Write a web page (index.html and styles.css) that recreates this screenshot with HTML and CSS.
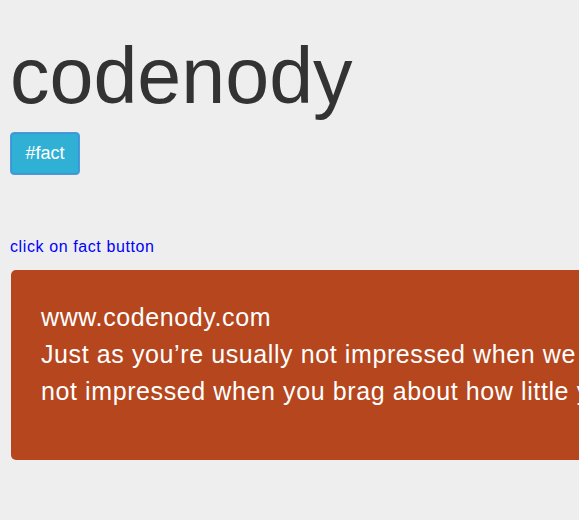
FILE: index.html
```html
<!DOCTYPE html>
<html lang="en">
<head>
<meta charset="utf-8">
<title>codenody</title>
<link rel="stylesheet" href="styles.css">
</head>
<body>
<div class="page">
  <h1 class="title">codenody</h1>
  <div class="actions">
    <button class="btn-fact" type="button">#fact</button>
  </div>
  <p class="hint"><a class="hint-link" href="#">click on fact button</a></p>
  <div class="fact-card">
    <p class="fact-text">www.codenody.com<br>Just as you’re usually not impressed when we brag about how little we sleep, we’re<br>not impressed when you brag about how little you sleep either.</p>
  </div>
</div>
</body>
</html>
```
FILE: styles.css
```css
html, body {
  margin: 0;
  padding: 0;
  background: #eeeeee;
  overflow: hidden;
}
body {
  font-family: "Liberation Sans", Arial, sans-serif;
  color: #333333;
}
.page {
  padding: 32px 0 0 10px;
  display: flex;
  flex-direction: column;
  align-items: flex-start;
}
.title {
  margin: 0;
  font-size: 79px;
  font-weight: normal;
  line-height: 87px;
  color: #333333;
}
.actions {
  margin-top: 13px;
}
.btn-fact {
  font-family: "Liberation Sans", Arial, sans-serif;
  font-size: 18px;
  line-height: 23px;
  color: #ffffff;
  background: #31b0d5;
  border: 1px solid #5a94e6;
  border-radius: 4px;
  padding: 9px 14px;
  width: 70px;
  box-sizing: border-box;
  cursor: pointer;
  box-shadow: inset 0 0 0 1px #2f9ccc;
}
.hint {
  margin: 62px 0 0 0;
  font-size: 16px;
  line-height: 20px;
  letter-spacing: 0.6px;
}
.hint-link {
  color: #0000ff;
  text-decoration: none;
}
.fact-card {
  margin-top: 13px;
  margin-left: 1px;
  width: 1100px;
  box-sizing: border-box;
  background: #b5461e;
  border-radius: 5px;
  padding: 29px 30px 50px 30px;
}
.fact-text {
  margin: 0;
  font-size: 25px;
  line-height: 37px;
  letter-spacing: 0.6px;
  color: #ffffff;
}
```
